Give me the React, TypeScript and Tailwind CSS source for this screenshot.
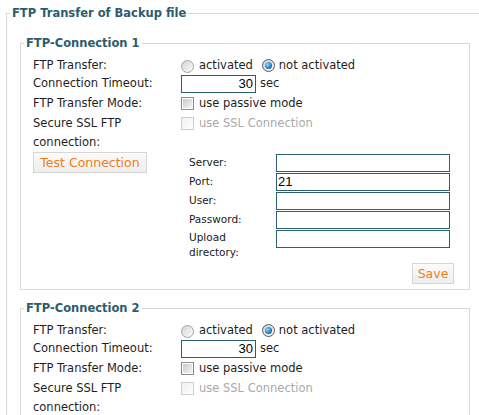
import React from "react";

function Radio({ checked }: { checked?: boolean }) {
  if (checked) {
    return (
      <span className="inline-flex items-center justify-center w-[13px] h-[13px] rounded-full border border-[#5a5a5a] bg-[linear-gradient(135deg,#cfcfcf,#fafafa)] shrink-0">
        <span className="w-[7px] h-[7px] rounded-full bg-[radial-gradient(circle_at_35%_35%,#8fd8ff,#1a7fc4_60%,#0b4f8a)]" />
      </span>
    );
  }
  return (
    <span className="inline-block w-[13px] h-[13px] rounded-full border border-[#a4a4a4] bg-[linear-gradient(135deg,#d4d4d4,#fbfbfb)] shrink-0" />
  );
}

function Check({ disabled }: { disabled?: boolean }) {
  if (disabled) {
    return <span className="inline-block w-[13px] h-[13px] border border-[#cfcfcf] bg-[linear-gradient(135deg,#efefef,#ffffff)] shrink-0" />;
  }
  return (
    <span className="inline-flex items-center justify-center w-[13px] h-[13px] border border-[#8c8c8c] bg-white shrink-0">
      <span className="w-[9px] h-[9px] bg-[linear-gradient(135deg,#c9c9c9,#f4f4f4)]" />
    </span>
  );
}

function Btn({ children, w }: { children: React.ReactNode; w: string }) {
  return (
    <button
      type="button"
      className={`${w} h-[21px] border border-[#d6d6d6] bg-[linear-gradient(#fbfbfb,#eeeeee)] text-[#f07d19] text-[12.5px] leading-[19px] text-center`}
    >
      {children}
    </button>
  );
}

function Conn({ n, full }: { n: number; full?: boolean }) {
  return (
    <fieldset className={`w-[450px] border border-[#d9d9d9] ${n === 2 ? "mt-[11px]" : ""}`}>
      <legend className="ml-[3px] px-[2px] font-bold text-[#2d5b6e] leading-[14px]">FTP-Connection {n}</legend>
      <div className="pl-[12px] pr-[15px] pt-[7px] pb-[5px]">
        <div className="grid grid-cols-[148px_1fr]">
          <div className="h-[18px] flex items-center">FTP Transfer:</div>
          <div className="h-[18px] flex items-center">
            <Radio />
            <span className="ml-[5px]">activated</span>
            <span className="ml-[9px]"><Radio checked /></span>
            <span className="ml-[4px]">not activated</span>
          </div>

          <div className="h-[18px] flex items-center">Connection Timeout:</div>
          <div className="h-[18px] flex items-center">
            <input
              defaultValue="30"
              className="w-[75px] h-[18px] border border-[#2b5f6b] pr-[2px] text-right font-['Liberation_Sans',sans-serif] text-[13px] text-black outline-none"
            />
            <span className="ml-[4px]">sec</span>
          </div>

          <div className="h-[21px] flex items-center">FTP Transfer Mode:</div>
          <div className="h-[21px] flex items-center">
            <Check />
            <span className="ml-[5px]">use passive mode</span>
          </div>

          <div className="leading-[19px]">
            Secure SSL FTP
            <br />
            connection:
          </div>
          <div className="h-[19px] flex items-center">
            <Check disabled />
            <span className="ml-[5px] text-[#a9a9a9]">use SSL Connection</span>
          </div>
        </div>

        {full && (
          <>
            <div className="flex">
              <div className="w-[156px]">
                <Btn w="w-[114px]">Test Connection</Btn>
              </div>
              <div className="grid grid-cols-[87px_174px] gap-y-[1px] pt-[2px] text-[10.5px] text-[#1a1a1a]">
                {["Server:", "Port:", "User:", "Password:"].map((l) => (
                  <React.Fragment key={l}>
                    <div className="h-[18px] flex items-center">{l}</div>
                    <input
                      defaultValue={l === "Port:" ? "21" : ""}
                      className="w-[174px] h-[18px] border border-[#2b5f6b] pl-[1px] font-['Liberation_Sans',sans-serif] text-[13px] text-black outline-none"
                    />
                  </React.Fragment>
                ))}
                <div className="leading-[15px]">
                  Upload
                  <br />
                  directory:
                </div>
                <input className="w-[174px] h-[18px] border border-[#2b5f6b] pl-[1px] font-['Liberation_Sans',sans-serif] text-[13px] text-black outline-none" />
              </div>
            </div>
            <div className="flex justify-end mt-[3px]">
              <Btn w="w-[42px]">Save</Btn>
            </div>
          </>
        )}
      </div>
    </fieldset>
  );
}

export default function App() {
  return (
    <div className="w-[479px] h-[415px] overflow-hidden bg-white pt-[6px] pl-[6px] font-['DejaVu_Sans',sans-serif] text-[11.5px] text-[#1e1e1e]">
      <fieldset className="w-[500px] border border-[#d9d9d9]">
        <legend className="ml-[3px] px-[2px] font-bold text-[#2d5b6e] leading-[14px]">FTP Transfer of Backup file</legend>
        <div className="pl-[13px] pt-[16px] pb-[10px]">
          <Conn n={1} full />
          <Conn n={2} />
        </div>
      </fieldset>
    </div>
  );
}
